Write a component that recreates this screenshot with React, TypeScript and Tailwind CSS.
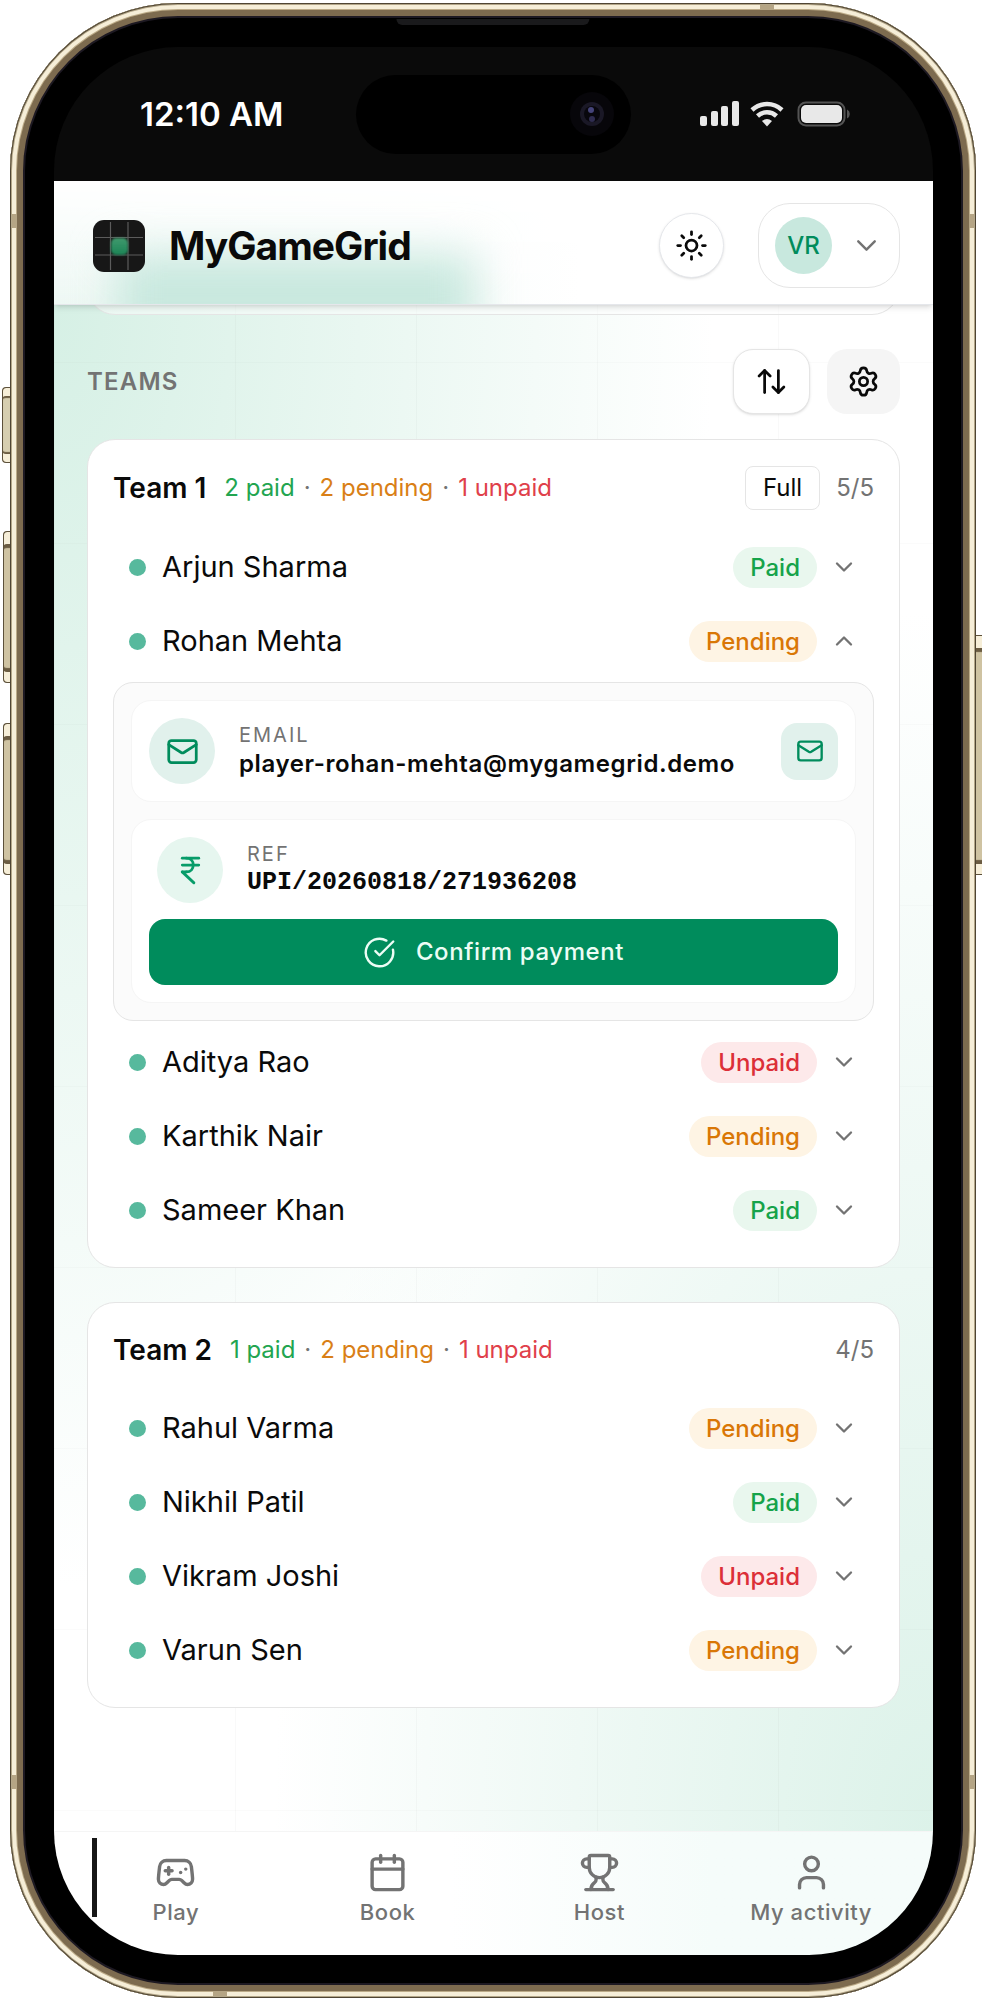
// src/App.tsx
import React, { useState } from 'react';
import {
  ArrowUpDown,
  Calendar,
  ChevronDown,
  ChevronUp,
  CircleCheckBig,
  Gamepad2,
  IndianRupee,
  Mail,
  Settings,
  Sun,
  Trophy,
  User,
} from 'lucide-react';

type Status = 'Paid' | 'Pending' | 'Unpaid';

interface Player {
  name: string;
  status: Status;
  email?: string;
  reference?: string;
}

interface Team {
  name: string;
  size: number;
  players: Player[];
}

const teams: Team[] = [
  {
    name: 'Team 1',
    size: 5,
    players: [
      { name: 'Arjun Sharma', status: 'Paid' },
      {
        name: 'Rohan Mehta',
        status: 'Pending',
        email: 'player-rohan-mehta@mygamegrid.demo',
        reference: 'UPI/20260818/271936208',
      },
      { name: 'Aditya Rao', status: 'Unpaid' },
      { name: 'Karthik Nair', status: 'Pending' },
      { name: 'Sameer Khan', status: 'Paid' },
    ],
  },
  {
    name: 'Team 2',
    size: 5,
    players: [
      { name: 'Rahul Varma', status: 'Pending' },
      { name: 'Nikhil Patil', status: 'Paid' },
      { name: 'Vikram Joshi', status: 'Unpaid' },
      { name: 'Varun Sen', status: 'Pending' },
    ],
  },
];

const statusStyles: Record<Status, string> = {
  Paid: 'bg-[#e9f7ee] text-[#16a34a]',
  Pending: 'bg-[#fef4e4] text-[#d97706]',
  Unpaid: 'bg-[#fde9ea] text-[#dc2f38]',
};

const navItems = [
  { label: 'Play', icon: Gamepad2 },
  { label: 'Book', icon: Calendar },
  { label: 'Host', icon: Trophy },
  { label: 'My activity', icon: User },
];

const StatusBar = () => (
  <div className="grid h-[134px] grid-cols-[1fr_275px_1fr] items-center text-white">
    <span className="pl-[86px] text-[33px] leading-none font-semibold">12:10 AM</span>
    <div className="flex h-[79px] items-center justify-end rounded-full bg-black pr-4">
      <svg width="46" height="46" viewBox="0 0 46 46" aria-hidden="true">
        <circle cx="23" cy="23" r="22" fill="#07060a" />
        <circle cx="23" cy="23" r="12" fill="#1a1826" />
        <circle cx="23" cy="23" r="8" fill="#08070d" />
        <circle cx="22" cy="19" r="3" fill="#45447a" />
        <circle cx="23" cy="28" r="3" fill="#2f2c50" />
      </svg>
    </div>
    <svg className="mr-[82px] justify-self-end" width="152" height="26" viewBox="0 0 152 26" fill="#e8e8e8" aria-hidden="true">
      <rect x="1" y="15" width="7" height="10" rx="2" />
      <rect x="12" y="10" width="7" height="15" rx="2" />
      <rect x="22" y="5" width="7" height="20" rx="2" />
      <rect x="33" y="0" width="7" height="25" rx="2" />
      <path d="M53 9a22 22 0 0 1 30 0" fill="none" stroke="#e8e8e8" strokeWidth="4.500" />
      <path d="M58.500 15a14 14 0 0 1 19 0" fill="none" stroke="#e8e8e8" strokeWidth="4.500" />
      <path d="M68 25.500l-5-5.500a8 8 0 0 1 10 0z" />
      <rect x="99.500" y="1.500" width="46" height="23" rx="7.500" fill="none" stroke="#545454" strokeWidth="2" />
      <rect x="102" y="4" width="41" height="18" rx="5" />
      <path d="M148 8.500a5 5 0 0 1 0 9z" fill="#545454" />
    </svg>
  </div>
);

const Logo = () => (
  <svg width="52" height="52" viewBox="0 0 52 52" aria-hidden="true">
    <defs>
      <linearGradient id="tile" x1="0" y1="0" x2="0" y2="1">
        <stop offset="0" stopColor="#3f9a6d" />
        <stop offset="1" stopColor="#1c8456" />
      </linearGradient>
      <filter id="glow" x="-50%" y="-50%" width="200%" height="200%">
        <feGaussianBlur stdDeviation="1" />
      </filter>
    </defs>
    <rect width="52" height="52" rx="11" fill="#171717" />
    <path d="M17.500 2v48M35 2v48M2 17.500h48M2 35h48" stroke="#5c5c5c" strokeWidth="1.200" />
    <rect x="18" y="18" width="17" height="17" rx="5" fill="url(#tile)" filter="url(#glow)" />
  </svg>
);

const Header = () => (
  <header className="relative z-10 flex items-center justify-between gap-4 border-b border-gray-200 bg-white px-[33px] pt-[22px] pb-4 shadow-md">
    <div className="pointer-events-none absolute inset-0 overflow-hidden">
      <div className="absolute inset-y-0 left-0 w-3/5 bg-linear-to-r from-[#eef8f4] to-white [mask-image:linear-gradient(to_top,black,transparent)]" />
      <div className="absolute -bottom-10 left-[7%] h-[90px] w-[41%] bg-[#c8e8de] blur-[22px]" />
    </div>
    <a href="#" className="relative flex items-center gap-6 pl-[6px]">
      <Logo />
      <span className="text-[39px] leading-none font-bold tracking-tight text-neutral-950">MyGameGrid</span>
    </a>
    <div className="relative flex items-center gap-[34px]">
      <button
        type="button"
        aria-label="Toggle theme"
        className="flex size-[65px] items-center justify-center rounded-full border border-gray-200 bg-white text-neutral-950 shadow-sm"
      >
        <Sun size={33} />
      </button>
      <button
        type="button"
        aria-label="Account menu"
        className="flex h-[85px] items-center gap-[18px] rounded-[32px] border border-neutral-200 bg-white px-4"
      >
        <span className="flex size-[57px] items-center justify-center rounded-full bg-[#c8e8de] text-2xl font-medium text-[#008c5c]">
          VR
        </span>
        <ChevronDown size={33} strokeWidth={1.75} className="text-neutral-500" />
      </button>
    </div>
  </header>
);

const PlayerDetails = ({ player }: { player: Player }) => (
  <div className="my-1 flex flex-col gap-[17px] rounded-[20px] border border-neutral-200 bg-[#fbfbfb] p-[17px]">
    <div className="flex items-center rounded-[20px] border border-neutral-100 bg-white p-[17px]">
      <span className="flex size-[66px] shrink-0 items-center justify-center rounded-full bg-[#e1f1ec] text-[#008c5c]">
        <Mail size={33} />
      </span>
      <div className="ml-6 min-w-0 flex-1">
        <p className="text-xl leading-[26px] tracking-widest text-neutral-500">EMAIL</p>
        <p className="text-2xl leading-8 font-semibold tracking-wide text-neutral-950">{player.email}</p>
      </div>
      <a
        href={`mailto:${player.email}`}
        aria-label={`Email ${player.name}`}
        className="flex size-[57px] shrink-0 items-center justify-center rounded-2xl bg-[#e1f1ec] text-[#008c5c]"
      >
        <Mail size={28} />
      </a>
    </div>
    <div className="flex flex-col gap-4 rounded-[20px] border border-neutral-100 bg-white p-[17px]">
      <div className="flex items-center pl-2">
        <span className="flex size-[66px] shrink-0 items-center justify-center rounded-full bg-[#e6f6ef] text-[#079c69]">
          <IndianRupee size={33} />
        </span>
        <div className="ml-6">
          <p className="text-xl leading-[26px] tracking-widest text-neutral-500">REF</p>
          <p className="font-['Liberation_Mono',monospace] text-[25px] leading-8 font-bold text-neutral-950">
            {player.reference}
          </p>
        </div>
      </div>
      <button
        type="button"
        className="flex h-[66px] items-center justify-center gap-5 rounded-2xl bg-[#008c5c] text-2xl font-medium tracking-wide text-[#ecfdf5]"
      >
        <CircleCheckBig size={33} strokeWidth={1.75} />
        Confirm payment
      </button>
    </div>
  </div>
);

const PlayerRow = ({ player, open, onToggle }: { player: Player; open: boolean; onToggle: () => void }) => (
  <li>
    <button type="button" aria-expanded={open} onClick={onToggle} className="flex h-[74px] w-full items-center px-4 text-left">
      <span className="size-[17px] rounded-full bg-[#57b99d]" />
      <span className="ml-4 flex-1 text-[29px] text-neutral-950">{player.name}</span>
      <span className={`rounded-full px-[17px] text-2xl leading-[41px] font-medium ${statusStyles[player.status]}`}>
        {player.status}
      </span>
      <span className="ml-[13px] text-neutral-500">
        {open ? <ChevronUp size={28} /> : <ChevronDown size={28} />}
      </span>
    </button>
    {open && player.email && <PlayerDetails player={player} />}
  </li>
);

const TeamCard = ({ team, openPlayer, onToggle }: { team: Team; openPlayer: string; onToggle: (name: string) => void }) => {
  const count = (status: Status) => team.players.filter((p) => p.status === status).length;
  const full = team.players.length === team.size;

  return (
    <section className="rounded-[28px] border border-neutral-200 bg-white px-[25px] pt-[26px] pb-5">
      <div className="mb-5 flex items-center text-2xl leading-[42px]">
        <h2 className="text-[28px] font-semibold text-neutral-950">{team.name}</h2>
        <p className="ml-[18px] flex flex-1 gap-[9px] text-neutral-500">
          <span className="text-[#22a550]">{count('Paid')} paid</span>
          <span>·</span>
          <span className="text-[#d97f17]">{count('Pending')} pending</span>
          <span>·</span>
          <span className="text-[#e0404a]">{count('Unpaid')} unpaid</span>
        </p>
        {full && (
          <span className="mr-4 rounded-lg border border-neutral-200 px-[17px] text-neutral-950">Full</span>
        )}
        <span className="text-neutral-500">
          {team.players.length}/{team.size}
        </span>
      </div>
      <ul>
        {team.players.map((player) => (
          <PlayerRow
            key={player.name}
            player={player}
            open={openPlayer === player.name}
            onToggle={() => onToggle(player.name)}
          />
        ))}
      </ul>
    </section>
  );
};

const BottomNav = () => (
  <nav className="relative grid grid-cols-4 border-t border-neutral-100 bg-linear-to-r from-white from-45% to-[#f5fcfa] to-75% px-4 pt-5 pb-7">
    <span className="absolute top-[6px] left-[38px] h-[79px] w-[5px] bg-neutral-900" />
    {navItems.map(({ label, icon: Icon }) => (
      <a key={label} href="#" className="flex flex-col items-center gap-1 text-[22px] leading-[30px] font-medium tracking-wide text-neutral-500">
        <Icon size={41} />
        {label}
      </a>
    ))}
  </nav>
);

// Hardware buttons and antenna bands around the metal frame
const FrameDetails = () => (
  <>
    <span className="absolute top-[384px] -left-2 h-[76px] w-2 rounded-l-sm border border-r-0 border-[#5c503a] bg-[#d6ceb0] shadow-[inset_0_9px_0_-1px_#f6eed8,inset_0_11px_1px_-1px_#6b5c42,inset_0_-9px_0_-1px_#f6eed8,inset_0_-11px_1px_-1px_#6b5c42]" />
    <span className="absolute top-[528px] -left-[7px] h-[152px] w-[7px] rounded-l-sm border border-r-0 border-[#5c503a] bg-[#cfc3a2] shadow-[inset_0_13px_0_-1px_#f6eed8,inset_0_17px_1px_-1px_#6b5c42,inset_0_-11px_0_-1px_#f6eed8,inset_0_-15px_1px_-1px_#6b5c42]" />
    <span className="absolute top-[720px] -left-[7px] h-[152px] w-[7px] rounded-l-sm border border-r-0 border-[#5c503a] bg-[#cfc3a2] shadow-[inset_0_13px_0_-1px_#f6eed8,inset_0_17px_1px_-1px_#6b5c42,inset_0_-11px_0_-1px_#f6eed8,inset_0_-15px_1px_-1px_#6b5c42]" />
    <span className="absolute top-[632px] -right-[6px] h-[240px] w-[6px] border border-r-0 border-l-0 border-[#5c503a] bg-[#cfc3a2] shadow-[inset_0_13px_0_-1px_#f6eed8,inset_0_17px_1px_-1px_#6b5c42,inset_0_-11px_0_-1px_#f6eed8,inset_0_-15px_1px_-1px_#6b5c42]" />
    <span className="absolute top-[211px] left-[2px] h-[14px] w-[5px] bg-[#b5a585]" />
    <span className="absolute top-[211px] right-[2px] h-[14px] w-[5px] bg-[#b5a585]" />
    <span className="absolute bottom-[209px] left-[2px] h-[14px] w-[5px] bg-[#b5a585]" />
    <span className="absolute right-[2px] bottom-[209px] h-[14px] w-[5px] bg-[#b5a585]" />
    <span className="absolute top-[2px] right-[202px] h-[5px] w-[14px] bg-[#b5a585]" />
    <span className="absolute bottom-[2px] left-[203px] h-[5px] w-[14px] bg-[#b5a585]" />
    <span className="absolute top-4 left-1/2 h-[6px] w-1/5 -translate-x-1/2 rounded-b-md bg-[#1a1a1c]" />
  </>
);

const App: React.FC = () => {
  const [openPlayer, setOpenPlayer] = useState('Rohan Mehta');
  const toggle = (name: string) => setOpenPlayer(openPlayer === name ? '' : name);

  return (
    <div className="flex min-h-screen bg-white pt-[3px] pr-[6px] pb-[2px] pl-[10px] font-['Inter',sans-serif]">
      <div className="relative flex flex-1 rounded-[168px] bg-black pt-[44px] pr-[43px] pb-[43px] pl-[44px] shadow-[inset_0_0_0_1px_#4f4533,inset_0_0_0_2px_#b3a688,inset_0_0_0_6px_#f6eed8,inset_0_0_0_7px_#bcab88,inset_0_0_0_13px_#7d6b4f,inset_0_0_0_15px_#1d1922]">
        <FrameDetails />
        <div className="flex min-w-0 flex-1 flex-col overflow-hidden rounded-[124px] bg-[#0a0a0a]">
          <StatusBar />
          <Header />
          <main className="flex-1 bg-white bg-[linear-gradient(to_right,rgba(0,0,0,0.025)_1px,transparent_1px),linear-gradient(to_bottom,rgba(0,0,0,0.015)_1px,transparent_1px),radial-gradient(ellipse_75%_84%_at_0%_0%,#d6f0e5,transparent),radial-gradient(ellipse_75%_80%_at_100%_100%,#dcf2e9,transparent)] bg-[size:181px_181px,181px_181px,100%_100%,100%_100%] bg-[position:0px_57px,0px_57px,0_0,0_0] px-[33px] pb-10">
            <div className="flex h-[10px] items-end overflow-hidden">
              <div className="h-14 w-full shrink-0 rounded-b-[28px] border border-neutral-200 bg-white/50" />
            </div>
            <div className="mt-[34px] mb-[25px] flex items-center gap-[17px]">
              <h1 className="flex-1 text-2xl font-semibold tracking-wider text-neutral-500">TEAMS</h1>
              <button
                type="button"
                aria-label="Sort teams"
                className="flex h-[65px] w-[77px] items-center justify-center rounded-[20px] border border-neutral-200 bg-white text-neutral-950 shadow-sm"
              >
                <ArrowUpDown size={33} />
              </button>
              <button
                type="button"
                aria-label="Team settings"
                className="flex h-[65px] w-[73px] items-center justify-center rounded-[20px] bg-neutral-100 text-neutral-950"
              >
                <Settings size={33} />
              </button>
            </div>
            <div className="flex flex-col gap-[34px]">
              {teams.map((team) => (
                <TeamCard key={team.name} team={team} openPlayer={openPlayer} onToggle={toggle} />
              ))}
            </div>
          </main>
          <BottomNav />
        </div>
      </div>
    </div>
  );
};

export default App;
